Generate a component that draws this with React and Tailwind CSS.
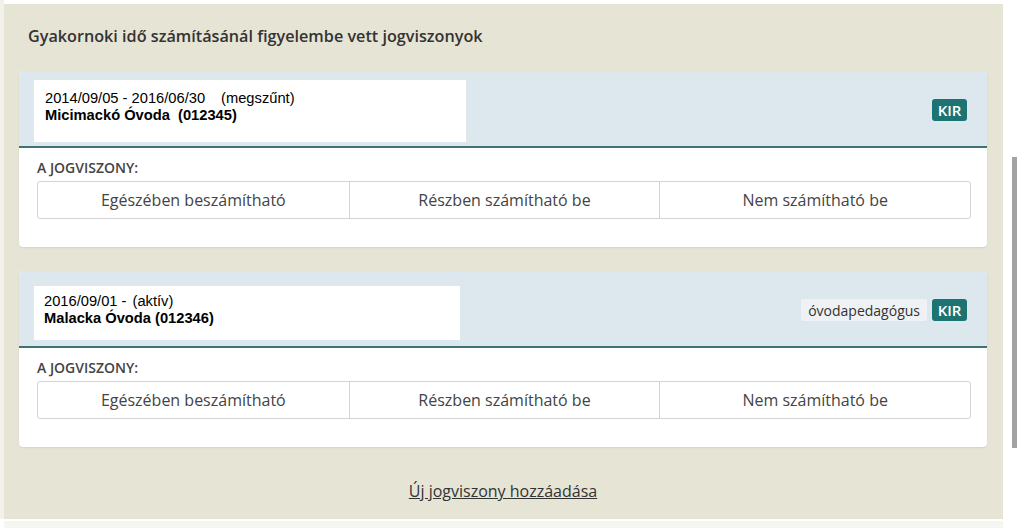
const jobs = [
  {
    id: 1,
    dates: '2014/09/05 - 2016/06/30',
    status: '(megszűnt)',
    gap: 'ml-[16px]',
    name: 'Micimackó Óvoda  (012345)',
    boxClass: 'w-[432px] h-[62px] mt-[9px] mb-[4px] pt-[10px] px-[11px]',
    tag: null,
  },
  {
    id: 2,
    dates: '2016/09/01 -',
    status: '(aktív)',
    gap: 'ml-[6px]',
    name: 'Malacka Óvoda (012346)',
    boxClass: 'w-[426px] h-[54px] mt-[15px] mb-[6px] pt-[7px] px-[10px]',
    tag: 'óvodapedagógus',
  },
];

const options = ['Egészében beszámítható', 'Részben számítható be', 'Nem számítható be'];

const JobCard = ({ job }) => (
  <div className="bg-white rounded-[4px] shadow-[0_1px_2px_rgba(0,0,0,0.08)] overflow-hidden">
    <div className="flex items-center bg-[#dde8ee] border-b-2 border-[#3f7373] pl-[15px] pr-[20px]">
      <div className={`bg-white font-['Liberation_Sans',Arial,sans-serif] text-[14.7px] leading-[17px] text-black ${job.boxClass}`}>
        <div className="whitespace-pre">
          {job.dates}
          <span className={job.gap}>{job.status}</span>
        </div>
        <div className="font-bold whitespace-pre">{job.name}</div>
      </div>
      <div className="ml-auto mt-[3px] flex items-center gap-[5px] font-['Open_Sans',sans-serif] text-[14px]">
        {job.tag && (
          <span className="h-[22px] px-[7px] flex items-center bg-[#eef2f4] text-[#333] rounded-[2px]">{job.tag}</span>
        )}
        <span className="h-[22px] w-[35px] flex items-center justify-center bg-[#1d7371] text-white text-[15px] font-semibold rounded-[3px]">
          KIR
        </span>
      </div>
    </div>
    <div className="pt-[10px] pb-[28px] pl-[18px] pr-[16px] font-['Open_Sans',sans-serif]">
      <div className="text-[14px] leading-[20px] font-semibold text-[#444]">A JOGVISZONY:</div>
      <div className="mt-[3px] grid grid-cols-3 h-[38px] border border-[#d4d4d4] rounded-[3px] bg-white">
        {options.map((o, i) => (
          <button
            key={o}
            className={`flex items-center justify-center text-[16px] text-[#444] ${i > 0 ? 'border-l border-[#d4d4d4]' : ''}`}
          >
            {o}
          </button>
        ))}
      </div>
    </div>
  </div>
);

const App = () => {
  return (
    <div className="w-[1024px] h-[528px] bg-white overflow-hidden flex flex-col">
      <div className="flex">
        <div className="w-[4px] bg-[#f3f2ea]" />
        <div className="mt-[4px] w-[999px] h-[515px] bg-[#e6e4d4] px-[15px] pr-[16px] font-['Open_Sans',sans-serif] flex flex-col">
          <h2 className="mt-[21px] ml-[9px] text-[16.2px] leading-[22px] font-semibold text-[#333]">
            Gyakornoki idő számításánál figyelembe vett jogviszonyok
          </h2>
          <div className="mt-[24px] flex flex-col gap-[24px]">
            {jobs.map((j) => (
              <JobCard key={j.id} job={j} />
            ))}
          </div>
          <div className="mt-[32px] text-center">
            <a href="#" className="text-[16px] leading-[22px] text-[#333] underline">
              Új jogviszony hozzáadása
            </a>
          </div>
        </div>
        <div className="ml-[9px] mt-[157px] w-[5px] h-[291px] bg-[#a3a3a3]" />
      </div>
      <div className="mt-[2px] ml-[4px] w-[999px] flex-1 bg-[#f6f6f0]" />
    </div>
  );
};

export default App;
